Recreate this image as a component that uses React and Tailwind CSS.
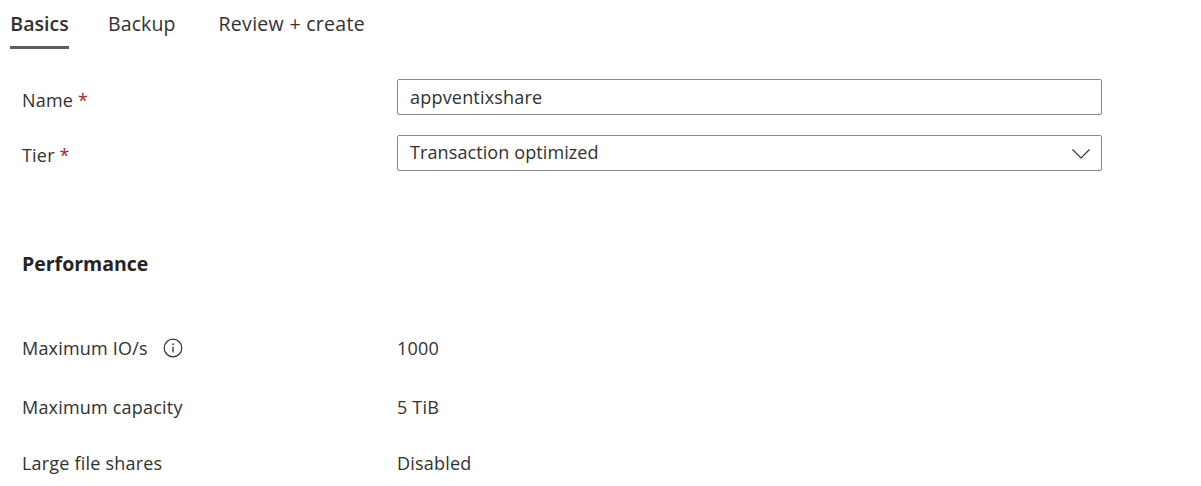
const font = { fontFamily: '"Open Sans", sans-serif' };

function Required() {
  return <span className="text-[#a4262c]"> *</span>;
}

function Row({ label, children, className }) {
  return (
    <div className={`flex items-center pl-[22px] ${className}`}>
      <div className="flex w-[375px] items-center">{label}</div>
      {children}
    </div>
  );
}

function InfoIcon() {
  return (
    <svg className="ml-[15px]" width="20" height="20" viewBox="0 0 20 20" fill="none" stroke="#323130">
      <circle cx="10" cy="10" r="8.8" strokeWidth="1.2" />
      <path d="M10 8.8v5.7" strokeWidth="1.3" />
      <circle cx="10" cy="6.2" r="0.9" fill="#323130" stroke="none" />
    </svg>
  );
}

export default function App() {
  return (
    <div className="h-[486px] w-[1201px] overflow-hidden bg-white text-[18px] tracking-[0.2px] text-[#323130]" style={font}>
      {/* Tabs */}
      <div className="flex h-[49px] items-start pl-[10px] text-[19.5px] tracking-[0.1px]">
        <div className="flex h-[49px] w-[59px] justify-center border-b-[3px] border-[#605e5c] pt-[10px] leading-[28px] font-semibold tracking-normal whitespace-nowrap">
          Basics
        </div>
        <div className="ml-[39px] pt-[10px] leading-[28px]">Backup</div>
        <div className="ml-[43px] pt-[10px] leading-[28px] tracking-[0.3px]">Review + create</div>
      </div>

      <Row className="mt-[30px] h-[36px]" label={<span className="pt-[6px]">Name<Required /></span>}>
        <input
          readOnly
          value="appventixshare"
          className="h-[36px] w-[705px] rounded-[2px] border border-[#8a8886] px-3 tracking-[0.2px] outline-none"
        />
      </Row>

      <Row className="mt-[20px] h-[36px]" label={<span className="pt-[4px]">Tier<Required /></span>}>
        <div className="flex h-[36px] w-[705px] items-center justify-between rounded-[2px] border border-[#8a8886] pr-[11px] pb-[2px] pl-3">
          <span className="tracking-[0.1px]">Transaction optimized</span>
          <svg className="mt-[4px]" width="18" height="10" viewBox="0 0 18 10" fill="none" stroke="#323130" strokeWidth="1.1">
            <path d="M0.5 0.5L9 9L17.5 0.5" />
          </svg>
        </div>
      </Row>

      <h2 className="mt-[78px] pl-[22px] text-[19.5px] leading-[30px] font-bold tracking-normal text-[#252423]">
        Performance
      </h2>

      <Row className="mt-[39px] h-[60px]" label={<><span>Maximum IO/s</span><InfoIcon /></>}>
        <span>1000</span>
      </Row>
      <Row className="h-[58px]" label={<span>Maximum capacity</span>}>
        <span>5 TiB</span>
      </Row>
      <Row className="h-[54px]" label={<span>Large file shares</span>}>
        <span>Disabled</span>
      </Row>
    </div>
  );
}
